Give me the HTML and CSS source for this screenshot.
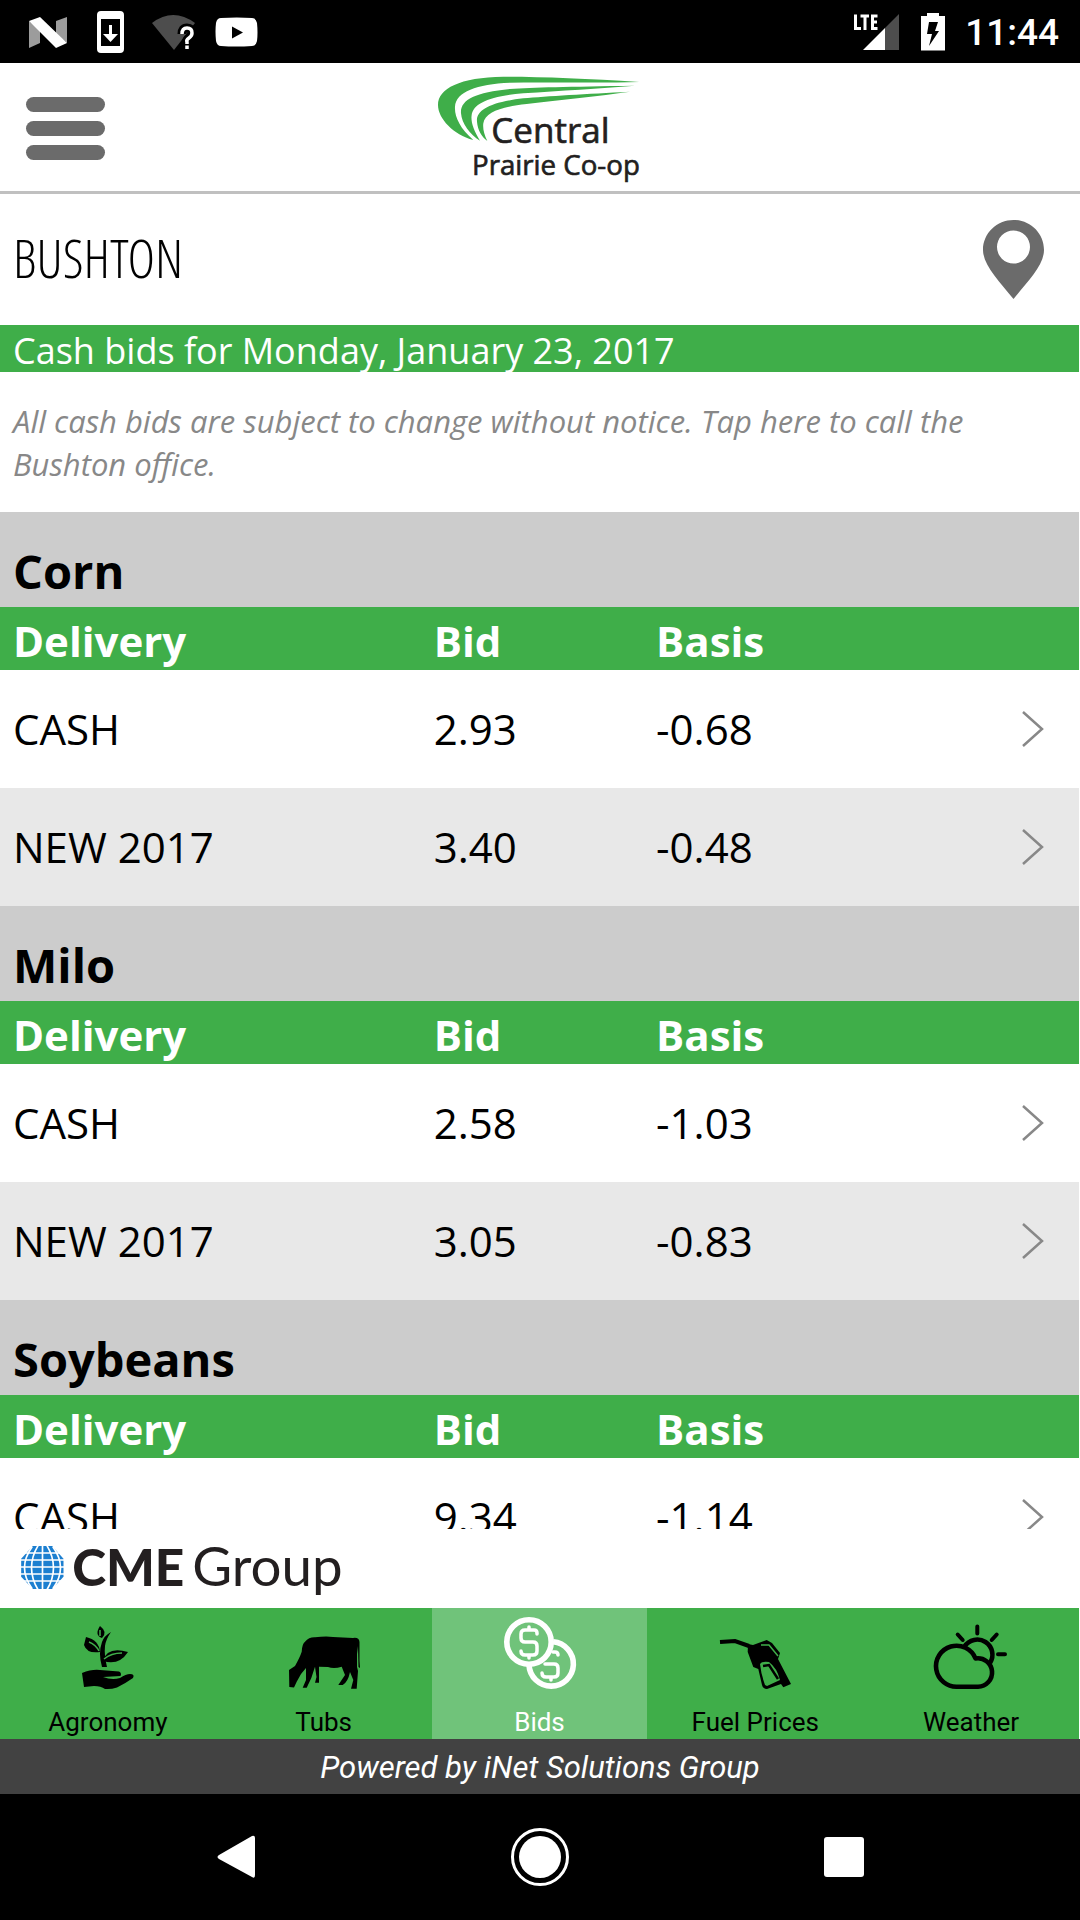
FILE: index.html
```html
<!DOCTYPE html>
<html lang="en">
<head>
<meta charset="utf-8">
<meta name="viewport" content="width=device-width, initial-scale=1">
<title>Central Prairie Co-op - Cash Bids</title>
<link rel="stylesheet" href="styles.css">
</head>
<body>
<div class="status-bar">
  <div class="status-group">
    <svg class="status-icon" viewBox="0 0 48 48" aria-hidden="true"><path fill="#9c9c9c" d="M5 13l11 9v13L5 40zM43 9v26L32 26V13z"/><path fill="#fff" d="M5 13l11-4 27 26-11 5z"/></svg>
    <svg class="status-icon" viewBox="0 0 48 48" aria-hidden="true"><path fill="#fff" fill-rule="evenodd" d="M15 3h19a4 4 0 0 1 4 4v34a4 4 0 0 1-4 4H15a4 4 0 0 1-4-4V7a4 4 0 0 1 4-4zM15 11v27h19V11z"/><path fill="#fff" d="M23 17h3v9h6l-7.500 8-7.500-8h6z"/></svg>
    <svg class="status-icon" viewBox="0 0 48 48" aria-hidden="true"><path fill="#4d4d4d" d="M4 15Q25-1 47 15L26 42z"/><path fill="none" stroke="#000" stroke-width="9" d="M34 26q0-6 5-6t5 5q0 3-3 5t-2 5v5"/><path fill="none" stroke="#fff" stroke-width="3.500" d="M34 26q0-6 5-6t5 5q0 3-3 5t-2 4v2M39 37.500v3.500"/></svg>
    <svg class="status-icon" viewBox="0 0 48 48" aria-hidden="true"><path fill="#fff" d="M11 10q16-1 31 0 4 0 5 5 1 10 0 18-1 5-5 5-16 1-31 0-4 0-5-5-1-10 0-18 1-5 5-5z"/><path d="M22 18.500v12l11-6z"/></svg>
  </div>
  <div class="status-group status-right">
    <svg class="status-icon" viewBox="0 0 48 48" aria-hidden="true"><path fill="#4d4d4d" d="M46 6v36H32V20z"/><path fill="#fff" d="M10 42l22-22v22z"/><path fill="none" stroke="#fff" stroke-width="3" d="M2.500 6.500V20.500H8M7.500 8H16M12 8V22M24.500 8H19.500V20.500H24.500M19.500 14H24"/></svg>
    <svg class="battery-icon" viewBox="0 0 24 48" aria-hidden="true"><path fill="#fff" d="M0 8h6V5h12v3h6v34.500H0z"/><path d="M8 14h9l-3 9h4L8 38l3-12H6z"/></svg>
    <span class="clock">11:44</span>
  </div>
</div>

<header class="app-header">
  <button class="menu-button" type="button" aria-label="Menu"><span></span><span></span><span></span></button>
  <svg class="logo" viewBox="102 30 636 360" role="img" aria-label="Central Prairie Co-op">
    <g fill="#3fae49">
      <path d="M718 66C560 55 420 50 310 50C180 52 114 85 114 135C114 175 160 225 220 240C180 205 163 170 165 140C168 95 230 72 330 68C450 66 600 70 718 66z"/>
      <path d="M705 77C500 80 400 82 330 87C225 97 180 120 183 160C185 190 210 225 240 242C220 210 212 185 215 165C220 130 270 108 370 100C480 92 600 86 705 77z"/>
      <path d="M690 95C560 102 440 108 370 115C270 127 228 150 231 185C233 210 245 230 262 243C252 222 248 205 250 190C255 155 310 140 380 132C480 120 600 108 690 95z"/>
    </g>
    <text class="logo-name" x="274" y="248">Central</text>
    <text class="logo-sub" x="216" y="346">Prairie Co-op</text>
  </svg>
</header>

<main class="bids">
  <div class="location">
    <h1>BUSHTON</h1>
    <button class="pin-button" type="button" aria-label="Choose location">
      <svg viewBox="0 0 61 79" aria-hidden="true"><path fill="#6b6b6b" fill-rule="evenodd" d="M30.500 0C47 0 61 13 61 30C61 45 45 61 30.500 79C16 61 0 45 0 30C0 13 14 0 30.500 0zM30.500 10.500a16.500 16.500 0 1 0 0 33a16.500 16.500 0 1 0 0-33z"/></svg>
    </button>
  </div>
  <p class="date-bar">Cash bids for Monday, January 23, 2017</p>
  <a class="notice" href="#call">All cash bids are subject to change without notice. Tap here to call the Bushton office.</a>

  <section>
    <h2 id="corn">Corn</h2>
    <table aria-labelledby="corn">
      <colgroup><col class="col-delivery"><col class="col-bid"><col><col class="col-more"></colgroup>
      <thead><tr><th>Delivery</th><th>Bid</th><th>Basis</th><th></th></tr></thead>
      <tbody>
        <tr><td>CASH</td><td>2.93</td><td>-0.68</td><td><a class="more" href="#corn-cash" aria-label="Details"><svg viewBox="0 0 22 36"><path d="M1 1l19 17L1 35"/></svg></a></td></tr>
        <tr><td>NEW 2017</td><td>3.40</td><td>-0.48</td><td><a class="more" href="#corn-new" aria-label="Details"><svg viewBox="0 0 22 36"><path d="M1 1l19 17L1 35"/></svg></a></td></tr>
      </tbody>
    </table>
  </section>
  <section>
    <h2 id="milo">Milo</h2>
    <table aria-labelledby="milo">
      <colgroup><col class="col-delivery"><col class="col-bid"><col><col class="col-more"></colgroup>
      <thead><tr><th>Delivery</th><th>Bid</th><th>Basis</th><th></th></tr></thead>
      <tbody>
        <tr><td>CASH</td><td>2.58</td><td>-1.03</td><td><a class="more" href="#milo-cash" aria-label="Details"><svg viewBox="0 0 22 36"><path d="M1 1l19 17L1 35"/></svg></a></td></tr>
        <tr><td>NEW 2017</td><td>3.05</td><td>-0.83</td><td><a class="more" href="#milo-new" aria-label="Details"><svg viewBox="0 0 22 36"><path d="M1 1l19 17L1 35"/></svg></a></td></tr>
      </tbody>
    </table>
  </section>
  <section>
    <h2 id="soybeans">Soybeans</h2>
    <table aria-labelledby="soybeans">
      <colgroup><col class="col-delivery"><col class="col-bid"><col><col class="col-more"></colgroup>
      <thead><tr><th>Delivery</th><th>Bid</th><th>Basis</th><th></th></tr></thead>
      <tbody>
        <tr><td>CASH</td><td>9.34</td><td>-1.14</td><td><a class="more" href="#soybeans-cash" aria-label="Details"><svg viewBox="0 0 22 36"><path d="M1 1l19 17L1 35"/></svg></a></td></tr>
      </tbody>
    </table>
  </section>
</main>

<div class="sponsor">
  <svg viewBox="60 87 980 237" role="img" aria-label="CME Group">
    <path fill="#1c7fd0" d="M98 138h58l34 38v54l-34 37H98l-35-37v-54z"/>
    <path fill="none" stroke="#fff" stroke-width="5" d="M60 159H194M60 180H194M60 201H194M60 222H194M60 243H194M127 136V270M114 136Q74 203 114 270M140 136Q180 203 140 270M96 140Q50 203 96 266M158 140Q204 203 158 266"/>
    <text class="cme" x="216" y="257">CME</text>
    <text class="cme-group" x="576" y="257">Group</text>
  </svg>
</div>

<nav class="tabs">
  <a href="#agronomy">
    <svg viewBox="0 0 72 72" aria-hidden="true"><path d="M10 56Q20 52 28 53L47 54.500Q50 56 48.500 59Q40 59.500 31 60Q40 63.500 48 61Q54 57 58 57Q63 57 61 61Q54 66 45 70.500Q39 72.500 33 72Q29 69 22 69L12 70z"/><path d="M30 50Q26 36 30 25Q32 19 39 15Q34 22 33 29Q32 38 35 50z"/><path d="M14 20Q27 23 28 35Q15 37 12 28Q13 24 14 20z"/><path d="M31 44Q35 29 56 35Q47 49 31 44z"/><path d="M28 9Q36 15 30 21Q22 18 28 9z"/><path class="vein" d="M28 13v6M17 25Q24 28 27 34M32 42Q39 36 50 36"/></svg>
    Agronomy
  </a>
  <a href="#tubs">
    <svg viewBox="0 0 72 72" aria-hidden="true"><path d="M1 53L7 49Q12 40 13.700 34.700Q14 27 17 24.700Q21 20 27 20.300Q38 19 45 20L65 21Q71 20 71.500 25V44L72 51L70.500 50L70 29L69 37V50L70 54L68.700 71.700H63L65.300 63L62 55Q60 65 54.700 68H50.300L57 58L53.700 49.700Q46 52 40 50L31 49.700L31 65.700H27L28.500 60L27 49.700Q24 61 18.700 70.700H14.700L18 63V51Q12 57 8.700 64.700L6 70.500L1.300 70z"/></svg>
    Tubs
  </a>
  <a class="active" href="#bids" aria-current="page">
    <svg viewBox="-1 0 72 72" aria-hidden="true"><g fill="none" stroke="#fff" stroke-width="5.600"><circle cx="25" cy="25" r="22.200"/><path d="M49.200 24.800A22.200 22.200 0 1 1 25 48"/><g stroke-width="3.500" stroke-linecap="round" stroke-linejoin="round"><path d="M33 17v-1q0-3-3-3H21q-4 0-4 4v4q0 4 4 4h8q4 0 4 4v5q0 4-4 4h-8q-4 0-4-4M25 10v3M25 38v3"/><path d="M49 35h2q3 0 3 3M41 47h9q4 0 4 4v5q0 4-4 4h-8q-4 0-4-4M47 60v3"/></g></g></svg>
    Bids
  </a>
  <a href="#fuel">
    <svg viewBox="-1 0 72 72" aria-hidden="true"><path fill="none" stroke="#000" stroke-width="4" d="M0 25L15 24L29 29"/><path fill-rule="evenodd" d="M28 27L33 28L46.700 23L52 26L60 36L58 42L71 67L63.300 70.300L61 67L47 72Q43 72 42 68L38.300 52L33.300 50L27.700 35zM40 47Q41 57 45 68L47 69L60 63Q57 51 49 45Q42 44 40 47z"/><path fill="none" stroke="#000" stroke-width="2.500" d="M43 49l6-1 9 14"/><path class="vein" d="M41 28l8 0 9 11"/></svg>
    Fuel Prices
  </a>
  <a href="#weather">
    <svg viewBox="-1 0 72 72" aria-hidden="true"><g fill="none" stroke="#000" stroke-width="4.600" stroke-linejoin="round"><path d="M42 69.700H21.700A20.500 20.500 0 1 1 39.500 41.500A14.200 14.200 0 1 1 42 69.700z"/><path d="M28.500 29.500A15 15 0 0 1 54 46"/><path stroke-linecap="round" stroke-width="4" d="M41.300 9.500v7M60.700 17.500l-5 5.500M21.700 17.500l5 5.500M62 37.300h7"/></g></svg>
    Weather
  </a>
</nav>

<footer class="powered">Powered by iNet Solutions Group</footer>

<div class="system-nav">
  <button type="button" aria-label="Back"><svg viewBox="0 0 60 60"><path fill="#fff" d="M46 9Q49 8 49 11V48Q49 52 46 50L13 32Q10 30 13 28z"/></svg></button>
  <button type="button" aria-label="Home"><svg viewBox="0 0 60 60"><circle cx="30" cy="30" r="27.500" fill="none" stroke="#fff" stroke-width="3"/><circle cx="30" cy="30" r="21" fill="#fff"/></svg></button>
  <button type="button" aria-label="Recent apps"><svg viewBox="0 0 60 60"><rect x="10" y="10" width="40" height="40" rx="3" fill="#fff"/></svg></button>
</div>
</body>
</html>
```

FILE: styles.css
```css
* { box-sizing: border-box; }

body {
  margin: 0;
  height: 100vh;
  display: flex;
  flex-direction: column;
  background: #fff;
  color: #000;
  font-family: "Open Sans", "Noto Sans", sans-serif;
}

h1, h2, p { margin: 0; font-weight: 400; }
a { color: inherit; text-decoration: none; }
button { padding: 0; border: 0; background: none; }
svg { display: block; }

.status-bar {
  flex: none;
  height: 63px;
  padding: 0 21px 0 24px;
  display: flex;
  justify-content: space-between;
  align-items: center;
  background: #000;
  color: #fff;
}
.status-group { display: flex; align-items: center; gap: 14px; }
.status-right { gap: 20px; }
.status-icon { width: 48px; height: 48px; }
.battery-icon { width: 24px; height: 48px; }
.clock { padding-top: 2px; font: 500 37px/48px Roboto, sans-serif; }

.app-header {
  flex: none;
  padding: 7px 26px 1px;
  display: grid;
  grid-template-columns: 1fr auto 1fr;
  align-items: center;
  border-bottom: 3px solid #c0c0c0;
}
.menu-button { width: 79px; padding-bottom: 4px; display: grid; gap: 9px; }
.menu-button span { height: 15px; border-radius: 8px; background: #6b6b6b; }
.logo { width: 212px; height: 120px; }
.logo text { fill: #231f20; stroke: #231f20; stroke-width: 2px; }
.logo-name { font: 400 105px "Open Sans", sans-serif; }
.logo-sub { font: 400 83px "Open Sans", sans-serif; }

.bids { flex: 1; min-height: 0; margin-right: 1px; overflow: hidden; }

.location {
  height: 131px;
  padding: 0 35px 0 13px;
  display: flex;
  justify-content: space-between;
  align-items: center;
}
h1 {
  padding-bottom: 4px;
  font: 300 53px/70px "Open Sans Condensed Light", "Open Sans Condensed", "Liberation Sans Narrow", sans-serif;
}
.pin-button svg { width: 61px; height: 79px; }

.date-bar {
  height: 47px;
  padding: 0 13px;
  background: #3fae49;
  color: #fff;
  font-size: 36px;
  line-height: 52px;
}
.notice {
  display: block;
  padding: 28px 100px 26px 13px;
  color: #888;
  font-size: 31px;
  font-style: italic;
  line-height: 43px;
}

h2 {
  height: 95px;
  padding: 26px 13px 0;
  background: #ccc;
  font-size: 47px;
  font-weight: 700;
  line-height: 66px;
}

table { width: 100%; table-layout: fixed; border-collapse: collapse; font-size: 42px; }
.col-delivery { width: 39%; }
.col-bid { width: 20.6%; }
.col-more { width: 100px; }
th, td { padding: 0 0 0 13px; text-align: left; }
th { height: 63px; padding-top: 5px; background: #3fae49; color: #fff; font-weight: 700; line-height: 58px; }
td { height: 118px; line-height: 58px; }
tbody tr:nth-child(even) { background: #e8e8e8; }
.more { display: flex; justify-content: flex-end; padding-right: 35px; }
.more svg { width: 22px; height: 36px; fill: none; stroke: #888; stroke-width: 2.5; }

.sponsor { flex: none; padding-left: 20px; }
.sponsor svg { width: 327px; height: 79px; }
.sponsor text { fill: #231f20; }
.cme { font: 900 154px Lato, sans-serif; }
.cme-group { font: 400 164px Lato, sans-serif; }

.tabs {
  flex: none;
  margin-right: 1px;
  display: grid;
  grid-template-columns: repeat(5, 1fr);
  background: #3fae49;
  font: 400 26px/32px Roboto, sans-serif;
}
.tabs a {
  height: 131px;
  padding-top: 9px;
  display: flex;
  flex-direction: column;
  align-items: center;
  gap: 17px;
}
.tabs svg { width: 72px; height: 72px; overflow: visible; }
.tabs .active { background: #70c37a; color: #fff; }
.vein { fill: none; stroke: #3fae49; stroke-width: 1.5; }

.powered {
  flex: none;
  height: 55px;
  background: #424242;
  color: #fff;
  font: italic 400 31px/58px Roboto, sans-serif;
  text-align: center;
}

.system-nav {
  flex: none;
  height: 126px;
  padding: 0 206px;
  display: flex;
  justify-content: space-between;
  align-items: center;
  background: #000;
}
.system-nav svg { width: 60px; height: 60px; }
```
